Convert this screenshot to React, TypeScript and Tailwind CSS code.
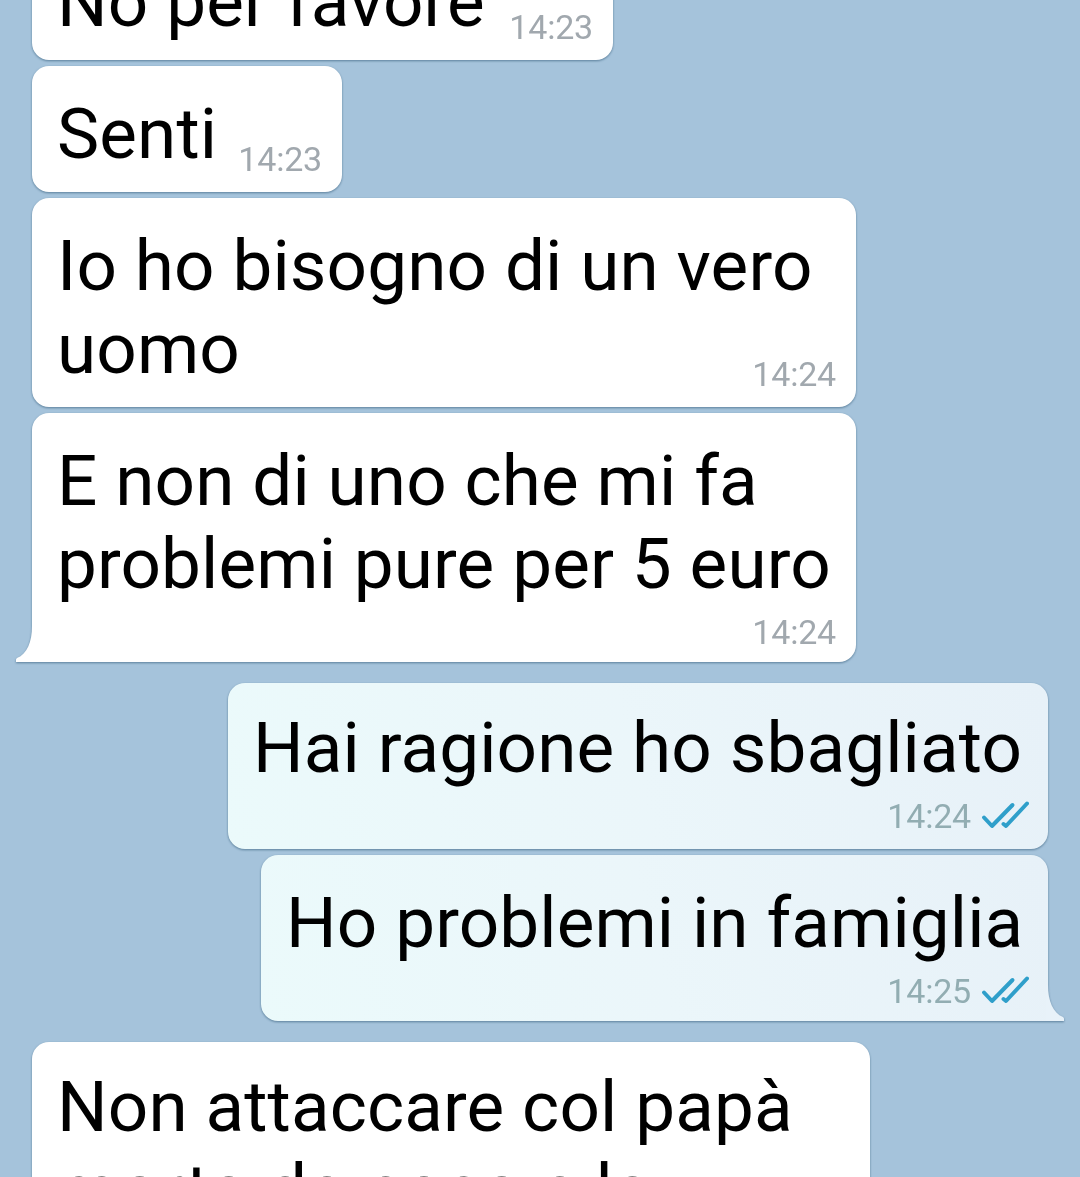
import React from 'react';
import clsx from 'clsx';

type Message = {
  lines: string[];
  time?: string;
  out?: boolean;
  tail?: boolean;
  // size and padding of the bubble
  box: string;
  // distance between the last line and the time
  timeGap?: string;
};

const messages: Message[] = [
  { lines: ['No per favore'], time: '14:23', box: 'w-[581px] h-[126px] pt-[26px]', timeGap: '-mt-9' },
  { lines: ['Senti'], time: '14:23', box: 'w-[310px] h-[126px] pt-[26px] mt-1.5', timeGap: '-mt-9' },
  {
    lines: ['Io ho bisogno di un vero', 'uomo'],
    time: '14:24',
    box: 'w-[824px] h-[209px] pt-[26px] mt-1.5',
    timeGap: '-mt-9',
  },
  {
    lines: ['E non di uno che mi fa', 'problemi pure per 5 euro'],
    time: '14:24',
    tail: true,
    box: 'w-[824px] h-[249px] pt-[26px] mt-1.5',
    timeGap: 'mt-[7px]',
  },
  {
    lines: ['Hai ragione ho sbagliato'],
    time: '14:24',
    out: true,
    box: 'w-[820px] h-[166px] pt-[23px] mt-[21px]',
    timeGap: 'mt-[7px]',
  },
  {
    lines: ['Ho problemi in famiglia'],
    time: '14:25',
    out: true,
    tail: true,
    box: 'w-[787px] h-[166px] pt-[26px] mt-1.5',
    timeGap: 'mt-[7px]',
  },
  {
    lines: ['Non attaccare col papà', 'morto da poco e la'],
    box: 'w-[838px] h-[249px] pt-[23px] mt-[21px]',
  },
];

const Checks = () => (
  <svg
    width="48"
    height="28"
    viewBox="0 0 48 28"
    fill="none"
    stroke="#2f9fca"
    strokeWidth="4"
    strokeLinecap="round"
    strokeLinejoin="round"
    className="mb-0.5 ml-2.5"
  >
    <path d="M3 16.5 L11 25 L31.5 4" />
    <path d="M22.5 23 L25 25 L46 2.5" />
  </svg>
);

const Tail = ({ out }: { out?: boolean }) => (
  <svg
    width="18"
    height="36"
    viewBox="0 0 18 36"
    className={clsx('absolute bottom-0', out ? '-right-[16px] -scale-x-100' : '-left-[16px]')}
  >
    <path d="M16 0 C16 16 11 28 1 32 Q-0.5 33 0 36 H18 V0 Z" fill={out ? '#e8f2f9' : '#ffffff'} />
  </svg>
);

const Bubble = ({ lines, time, out, tail, box, timeGap }: Message) => (
  <div
    className={clsx(
      'relative flex shrink-0 flex-col rounded-[17px] pl-[25px] drop-shadow-[0_1px_1px_rgba(50,90,120,0.65)]',
      out ? 'self-end bg-linear-75 from-[#ebfafb] via-[#ebf6fa] to-[#e7f1f8]' : 'self-start bg-white',
      tail && (out ? 'rounded-br-none' : 'rounded-bl-none'),
      box
    )}
  >
    {tail && <Tail out={out} />}
    <div className="text-[71px] leading-[83px] tracking-[0.13px] text-black whitespace-nowrap">
      {lines.map((line) => (
        <p key={line}>{line}</p>
      ))}
    </div>
    {time && (
      <div
        className={clsx(
          'flex h-10 items-center self-end text-[34px] leading-10 tracking-[-0.2px]',
          out ? 'pr-[19px] text-[#92adb2]' : 'pr-5 text-[#a1a8ae]',
          timeGap
        )}
      >
        <span>{time}</span>
        {out && <Checks />}
      </div>
    )}
  </div>
);

const App = () => {
  return (
    <main className="h-[1177px] w-[1080px] overflow-hidden bg-[#a5c3db] font-[Roboto,sans-serif]">
      <div className="-mt-[66px] flex flex-col px-8">
        {messages.map((message, i) => (
          <Bubble key={i} {...message} />
        ))}
      </div>
    </main>
  );
};

export default App;
